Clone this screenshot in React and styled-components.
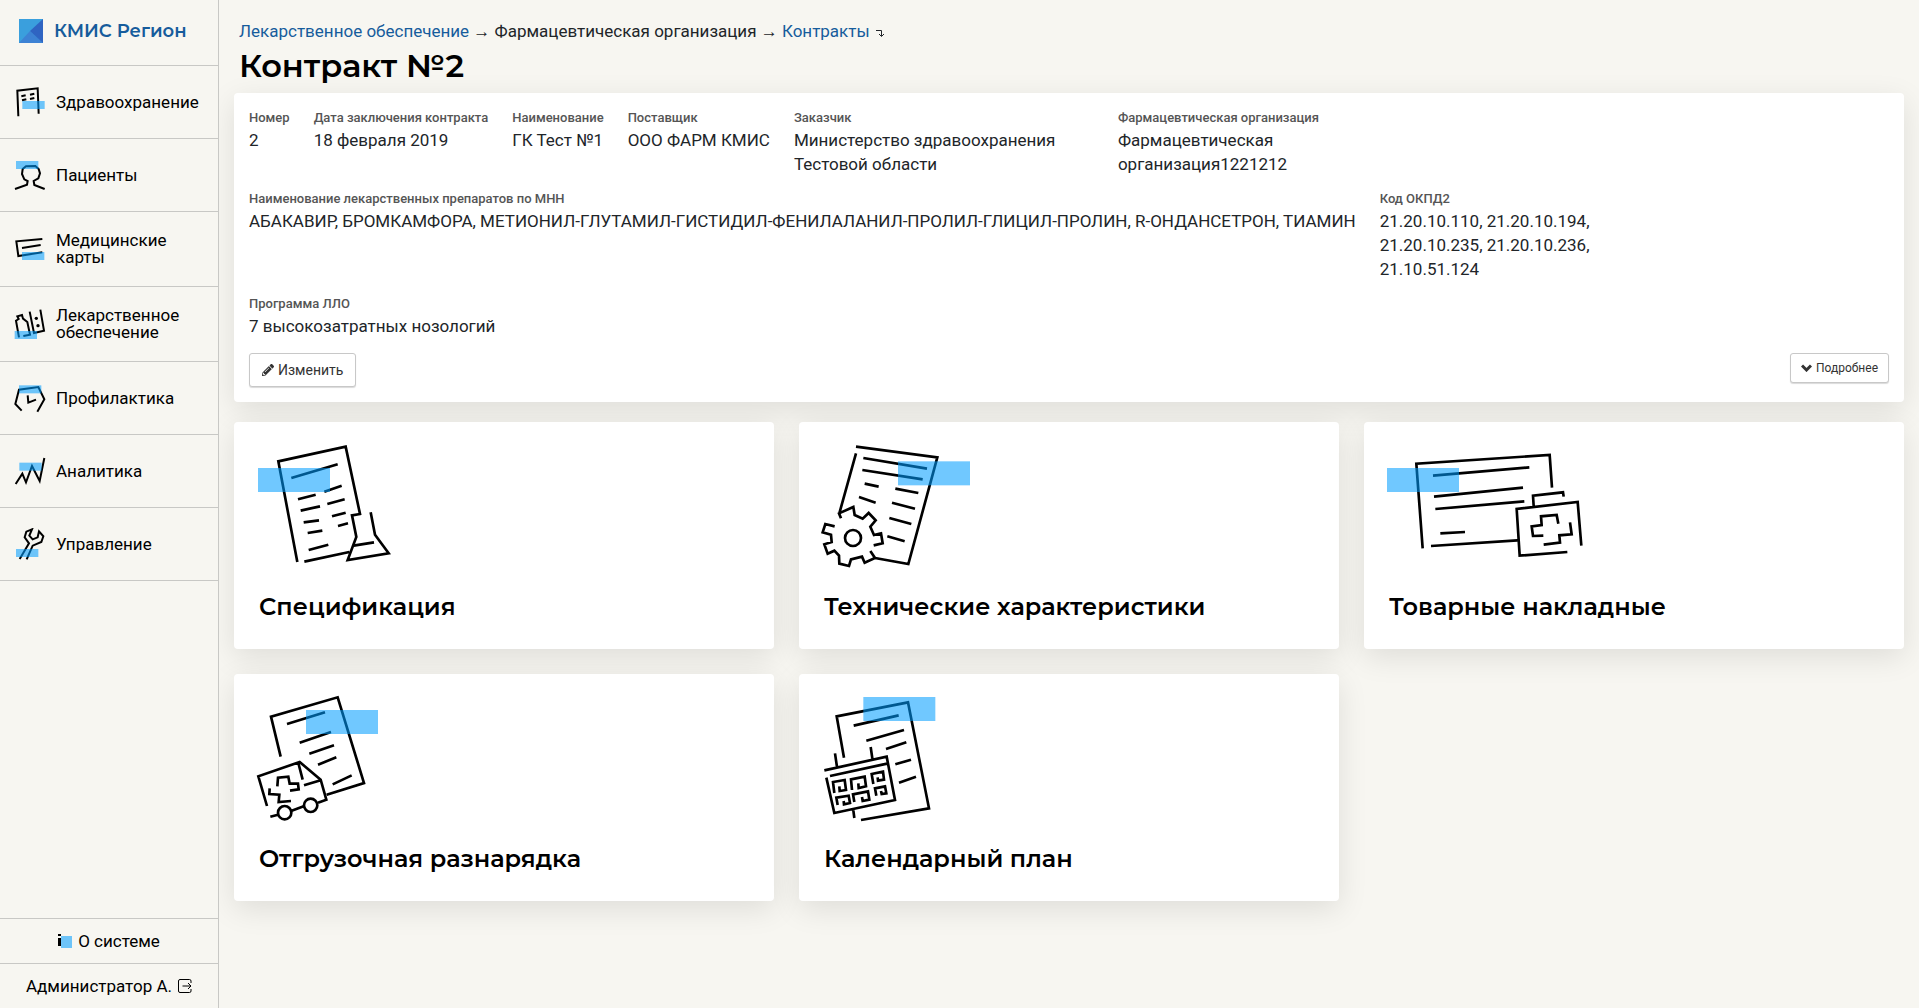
import React from 'react';
import styled, { createGlobalStyle } from 'styled-components';
import { FaPencilAlt } from 'react-icons/fa';

const LogoMark = () => (
  <svg width="24" height="24" viewBox="0 0 24 24" aria-hidden="true">
    <path fill="#3a9fdd" d="M0 0h24v24H0z" />
    <path fill="#3d82d4" d="M0 24 11 12l13 12z" />
    <path fill="#2f64c2" d="M24 0v24L11 12z" />
  </svg>
);

const menu = [
  {
    label: 'Здравоохранение',
    view: '42 258 96 96',
    tape: [67, 303],
    d: 'M55 349 L52 272 L113 265 L116 341 M64 289 L77 286 M90 284 L103 281 M66 301 L79 298 M90 297 L103 294',
  },
  {
    label: 'Пациенты',
    view: '42 477 96 96',
    tape: [48, 483],
    d: 'M45 567 L81 554 L83 543 L73 538 L66 522 L68 507 L78 499 L106 498 L116 507 L120 520 L115 535 L101 543 L103 555 L134 567',
  },
  {
    label: 'Медицинские карты',
    view: '42 699 96 96',
    tape: [66, 756],
    d: 'M127 717 L49 724 L55 768 L127 757 M66 744 L122 735',
  },
  {
    label: 'Лекарственное обеспечение',
    view: '42 69 96 96',
    tape: [44, 138],
    d: 'M57 157 L48 107 L56 102 L52 94 L66 90 L69 101 L82 111 L90 149 L70 153 M89 80 L102 144 L132 137 L121 74',
    dots: [[109, 100], [114, 122]],
  },
  {
    label: 'Профилактика',
    view: '42 291 96 96',
    tape: [57, 301],
    d: 'M65 377 L46 357 L57 314 L115 306 L133 343 L112 380 M83 331 L85 353 L108 344',
  },
  {
    label: 'Аналитика',
    view: '42 510 96 96',
    tape: [58, 533],
    d: 'M47 597 L67 566 L78 592 L96 543 L119 588 L133 519',
  },
  {
    label: 'Управление',
    view: '42 729 96 96',
    tape: [48, 792],
    d: 'M59 822 L87 775 L74 757 L79 740 L96 733 L88 752 L98 763 L113 757 L117 739 L130 754 L124 771 L98 782 L80 823',
  },
];

const MenuIcon = ({ view, tape, d, dots = [] }) => (
  <MenuSvg viewBox={view} aria-hidden="true">
    <path d={d} fill="none" stroke="#000" strokeWidth="6" />
    {dots.map(([cx, cy]) => <circle key={cy} cx={cx} cy={cy} r="5" />)}
    <Tape x={tape[0]} y={tape[1]} width="67" height="24" />
  </MenuSvg>
);

const fields = [
  { label: 'Номер', value: '2' },
  { label: 'Дата заключения контракта', value: '18 февраля 2019' },
  { label: 'Наименование', value: 'ГК Тест №1' },
  { label: 'Поставщик', value: 'ООО ФАРМ КМИС' },
  { label: 'Заказчик', value: 'Министерство здравоохранения Тестовой области', long: true },
  { label: 'Фармацевтическая организация', value: 'Фармацевтическая организация1221212', long: true },
  {
    label: 'Наименование лекарственных препаратов по МНН',
    value: 'АБАКАВИР, БРОМКАМФОРА, МЕТИОНИЛ-ГЛУТАМИЛ-ГИСТИДИЛ-ФЕНИЛАЛАНИЛ-ПРОЛИЛ-ГЛИЦИЛ-ПРОЛИН, R-ОНДАНСЕТРОН, ТИАМИН',
  },
  { label: 'Код ОКПД2', value: '21.20.10.110, 21.20.10.194, 21.20.10.235, 21.20.10.236, 21.10.51.124', long: true },
  { label: 'Программа ЛЛО', value: '7 высокозатратных нозологий' },
];

const tiles = [
  {
    title: 'Спецификация',
    view: '87 78 600 390',
    tape: [84, 156],
    d: `M202 438 L145 136 L347 92 L390 294 L366 298 L379 363 L353 432 L476 412 L435 356 L422 289
      M223 437 L358 408 M371 389 L432 379 M184 186 L323 145 M204 250 L257 236 M283 227 L335 209
      M212 284 L270 271 M292 264 L344 250 M221 319 L267 313 M306 301 L347 290
      M233 351 L277 344 M324 330 L354 322 M236 402 L295 386`,
  },
  {
    title: 'Технические характеристики',
    view: '87 78 600 390',
    tape: [309, 136],
    d: `M183 92 L427 124 L340 444 L240 426 M183 112 L133 292
      M205 126 L396 158 M202 162 L383 190 M209 203 L251 212 M301 218 L370 231
      M192 243 L242 260 M291 260 L360 278 M283 306 L349 324 M277 361 L329 376
      M138 307 L132 292 L175 273 L179 297 L203 308 L221 291 L242 313 L226 332 L237 357 L258 352 L263 382 L236 388
      M226 405 L240 426 L209 440 L201 422 L168 430 L162 450 L133 443 L132 419 L118 404 L98 413 L88 385 L110 378 L108 356 L83 349 L91 324 L119 331`,
    circles: [[174, 366, 24]],
  },
  {
    title: 'Товарные накладные',
    view: '87 78 600 390',
    tape: [81, 156],
    d: `M188 397 L169 143 L569 117 L576 215 M213 390 L472 373
      M219 179 L508 154 M222 242 L489 215 M226 279 L493 256 M241 352 L315 348
      M622 408 L479 419 L470 279 L653 258 L664 389 M521 270 L519 239 L609 229 L611 242
      M550 359 L519 360 L515 331 L545 327 L543 301 L590 297 L595 323 M551 386 L600 380 L598 358 L635 355 L630 319`,
  },
  {
    title: 'Отгрузочная разнарядка',
    view: '87 69 600 390',
    tape: [228, 117],
    d: `M152 257 L123 137 L323 79 L402 336 L290 371
      M171 159 L285 124 M209 215 L303 183 M238 248 L312 223 M264 281 L319 259 M308 340 L365 313
      M111 405 L85 316 L209 273 L272 326 L289 386 L264 395 M121 437 L144 431 M185 419 L221 406 M205 276 L218 326 M222 343 L272 328
      M142 346 L144 320 L175 317 L179 338 L204 338 L206 355 L180 359 M119 352 L118 369 L148 371 L146 393 L183 390`,
    circles: [[164, 425, 20], [242, 403, 20]],
  },
  {
    title: 'Календарный план',
    view: '87 69 600 390',
    tape: [205, 78],
    d: `M147 260 L125 136 L339 94 L402 412 L198 447
      M176 164 L311 133 M214 209 L327 177 M273 234 L334 214 M301 280 L348 266 M312 335 L363 317
      M88 298 L275 257 L300 387 L118 426 L94 320 M105 315 L276 278 M126 288 L120 247 M232 262 L227 228 M175 418 L178 441
      M118 366 L114 333 L149 327 L153 357 L134 360 L133 346
      M171 357 L168 325 L209 317 L213 346 L191 351 L190 337
      M235 339 L230 309 L264 302 L267 326 L249 329 L248 319
      M128 402 L124 380 L161 374 L165 396 L147 400 L146 390
      M178 393 L174 370 L219 361 L223 386 L203 390 L201 378
      M244 374 L240 352 L270 346 L274 367 L260 369 L258 360`,
  },
];

const TileIcon = ({ view, tape, d, circles = [] }) => (
  <TileSvg viewBox={view} aria-hidden="true">
    <g fill="none" stroke="#000" strokeWidth="8">
      <path d={d} />
      {circles.map(([cx, cy, r]) => <circle key={cx} cx={cx} cy={cy} r={r} />)}
    </g>
    <Tape x={tape[0]} y={tape[1]} width="216" height="72" />
  </TileSvg>
);

export default function App() {
  return (
    <>
      <GlobalStyle />
      <Page>
        <Sidebar>
          <Brand href="#"><LogoMark />КМИС Регион</Brand>
          <Menu>
            {menu.map(({ label, ...icon }) => (
              <MenuItem key={label} href="#">
                <MenuIcon {...icon} />
                <span>{label}</span>
              </MenuItem>
            ))}
          </Menu>
          <FooterLink href="#">
            <svg width="14" height="14" viewBox="0 0 14 14" aria-hidden="true">
              <path d="M0 0h3v2H0zM0 4h3v8H0z" />
              <Tape x="3" y="2" width="11" height="12" />
            </svg>
            О системе
          </FooterLink>
          <FooterLink href="#">
            Администратор А.
            <svg width="14" height="14" viewBox="0 0 14 14" fill="none" stroke="#000" aria-hidden="true">
              <path d="M13 4V2q0-1.5-1.5-1.5H2Q.5.5.5 2v10q0 1.5 1.500 1.500h9.500Q13 13.500 13 12v-2M4.500 7H13M10 4l3 3-3 3" />
            </svg>
          </FooterLink>
        </Sidebar>
        <Main>
          <Breadcrumbs>
            <a href="#">Лекарственное обеспечение</a> <Arrow>→</Arrow> Фармацевтическая организация <Arrow>→</Arrow> <a href="#">Контракты</a>{' '}
            <MoreButton aria-label="Ещё">
              <svg width="9" height="7" viewBox="0 0 9 7" fill="none" stroke="#212529" aria-hidden="true">
                <path d="M0 .5h5.500V6M3 4l2.500 2.500L8 4" />
              </svg>
            </MoreButton>
          </Breadcrumbs>
          <Title>Контракт №2</Title>
          <Card>
            <Fields>
              {fields.map(({ label, value, long }) => (
                <Field key={label} $long={long}>
                  <dt>{label}</dt>
                  <dd>{value}</dd>
                </Field>
              ))}
            </Fields>
            <Actions>
              <Button><FaPencilAlt size={12} />Изменить</Button>
              <Button $small>
                <svg width="11" height="8" viewBox="0 0 11 8" fill="none" stroke="#333" strokeWidth="3" aria-hidden="true">
                  <path d="M1 1.500 5.500 6 10 1.500" />
                </svg>
                Подробнее
              </Button>
            </Actions>
          </Card>
          <Tiles>
            {tiles.map(({ title, ...icon }) => (
              <Tile key={title} href="#">
                <TileIcon {...icon} />
                <TileTitle>{title}</TileTitle>
              </Tile>
            ))}
          </Tiles>
        </Main>
      </Page>
    </>
  );
}

const GlobalStyle = createGlobalStyle`
  * {
    box-sizing: border-box;
  }

  body {
    margin: 0;
    background: #f7f6f1;
    color: #212529;
    font: 17px/24px Roboto, sans-serif;
  }

  a {
    color: #165c9c;
    text-decoration: none;
  }
`;

const heading = 'Montserrat, Inter, sans-serif';

const Page = styled.div`
  display: flex;
  min-height: 100vh;
`;

const Sidebar = styled.aside`
  display: flex;
  flex-direction: column;
  flex: none;
  width: 219px;
  background: #f7f6f1;
  border-right: 1px solid #c8c8c5;
  z-index: 1;
`;

const Brand = styled.a`
  display: flex;
  align-items: center;
  gap: 11px;
  height: 66px;
  padding: 0 19px 4px;
  border-bottom: 1px solid #c8c8c5;
  font: 600 18px/24px ${heading};
`;

const Menu = styled.nav`
  flex: 1;
`;

const MenuItem = styled.a`
  display: flex;
  align-items: center;
  gap: 10px;
  min-height: 73px;
  padding: 20px 14px;
  border-bottom: 1px solid #c8c8c5;
  color: #000;
  line-height: 17px;
`;

const MenuSvg = styled.svg`
  flex: none;
  width: 32px;
  height: 32px;
`;

const Tape = styled.rect`
  fill: #009dff;
  fill-opacity: 0.56;
`;

const FooterLink = styled.a`
  display: flex;
  align-items: center;
  justify-content: center;
  gap: 6px;
  height: 45px;
  border-top: 1px solid #c8c8c5;
  color: #000;
`;

const Main = styled.main`
  flex: 1;
  min-width: 0;
  padding: 19px 15px 24px;
`;

const Breadcrumbs = styled.nav`
  padding: 0 5px;
`;

const Arrow = styled.span`
  font-family: "Liberation Serif", serif;
  line-height: 1;
`;

const MoreButton = styled.button`
  padding: 0 2px;
  background: none;
  border: none;
  font-size: 12px;
  line-height: 1;
  cursor: pointer;
`;

const Title = styled.h1`
  margin: 4px 0 8px;
  padding: 0 5px;
  color: #000;
  font: 600 32px/38px ${heading};
`;

const Card = styled.section`
  padding: 15px;
  background: #fff;
  border-radius: 4px;
  box-shadow: 0 8px 30px rgba(0, 0, 0, 0.1);
`;

const Fields = styled.dl`
  display: flex;
  flex-wrap: wrap;
  gap: 13px 24px;
  margin: 0 0 15px;
`;

const Field = styled.div`
  max-width: ${p => (p.$long ? '300px' : 'none')};

  dt {
    color: #555;
    font-size: 13px;
    font-weight: 500;
    line-height: 20px;
  }

  dd {
    margin: 0;
  }
`;

const Actions = styled.div`
  display: flex;
  align-items: flex-start;
  justify-content: space-between;
`;

const Button = styled.button`
  display: flex;
  align-items: center;
  gap: 4px;
  height: ${p => (p.$small ? '30px' : '34px')};
  padding: 0 ${p => (p.$small ? '10px' : '12px')};
  background: #fff;
  border: 1px solid #c8c8c8;
  border-radius: 3px;
  box-shadow: 0 1px 1px rgba(0, 0, 0, 0.15);
  color: #333;
  font-family: Roboto, sans-serif;
  font-size: ${p => (p.$small ? '12px' : '14px')};
  cursor: pointer;
`;

const Tiles = styled.div`
  display: grid;
  grid-template-columns: repeat(3, 1fr);
  gap: 25px;
  margin-top: 20px;
`;

const Tile = styled.a`
  padding: 20px 25px 27px;
  background: #fff;
  border-radius: 4px;
  box-shadow: 0 8px 30px rgba(0, 0, 0, 0.1);
`;

const TileSvg = styled.svg`
  display: block;
  width: 200px;
  height: 130px;
  overflow: visible;
`;

const TileTitle = styled.h2`
  margin: 20px 0 0;
  color: #000;
  font: 600 24px/30px ${heading};
`;
